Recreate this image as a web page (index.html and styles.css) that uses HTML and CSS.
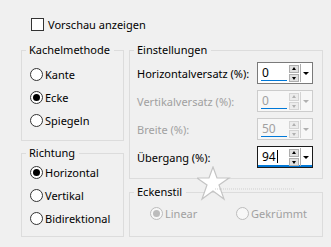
FILE: index.html
```html
<!DOCTYPE html>
<html lang="de">
<head>
    <meta charset="UTF-8">
    <title>Kacheln</title>
    <link rel="stylesheet" href="styles.css">
</head>
<body>
    <div class="dialog">
        <div class="preview">
            <span class="check"></span>
            <span>Vorschau anzeigen</span>
        </div>
        <div class="cols">
            <div class="col-left">
                <fieldset class="group tiles">
                    <legend>Kachelmethode</legend>
                    <div class="inner">
                        <div class="opt"><span class="radio"></span>Kante</div>
                        <div class="opt"><span class="radio on"></span>Ecke</div>
                        <div class="opt"><span class="radio"></span>Spiegeln</div>
                    </div>
                </fieldset>
                <fieldset class="group dir">
                    <legend>Richtung</legend>
                    <div class="inner">
                        <div class="opt"><span class="radio on"></span>Horizontal</div>
                        <div class="opt"><span class="radio"></span>Vertikal</div>
                        <div class="opt"><span class="radio"></span>Bidirektional</div>
                    </div>
                </fieldset>
            </div>
            <div class="col-right">
                <fieldset class="group settings">
                    <legend>Einstellungen</legend>
                    <div class="inner">
                        <div class="row">
                            <span>Horizontalversatz (%):</span>
                            <div class="spin">
                                <div class="val"><span>0</span><i class="bar"></i></div>
                                <div class="arrows"><b class="up"></b><b class="down"></b></div>
                                <div class="drop"><b></b></div>
                            </div>
                        </div>
                        <div class="row off">
                            <span>Vertikalversatz (%):</span>
                            <div class="spin">
                                <div class="val"><span>0</span><i class="bar"></i></div>
                                <div class="arrows"><b class="up"></b><b class="down"></b></div>
                                <div class="drop"><b></b></div>
                            </div>
                        </div>
                        <div class="row off">
                            <span>Breite (%):</span>
                            <div class="spin">
                                <div class="val"><span>50</span><i class="bar"></i></div>
                                <div class="arrows"><b class="up"></b><b class="down"></b></div>
                                <div class="drop"><b></b></div>
                            </div>
                        </div>
                        <div class="row">
                            <span>Übergang (%):</span>
                            <div class="spin focus">
                                <div class="val"><span>94<u class="caret"></u></span></div>
                                <div class="arrows"><b class="up"></b><b class="down"></b></div>
                                <div class="drop"><b></b></div>
                            </div>
                        </div>
                    </div>
                </fieldset>
                <fieldset class="group corner">
                    <legend>Eckenstil</legend>
                    <div class="inner opts off">
                        <div class="opt"><span class="radio on"></span>Linear</div>
                        <div class="opt"><span class="radio"></span>Gekrümmt</div>
                    </div>
                </fieldset>
            </div>
        </div>
        <!-- watermark stamp over the dialog -->
        <svg class="stamp" width="100" height="40" viewBox="0 0 100 40">
            <path d="M16 1 L20 12 L32 12 L22 19 L27 33 L16 25 L5 33 L10 19 L0 12 L12 12 Z" fill="#fff" stroke="#c4c4c4" stroke-width="1.2"/>
            <line x1="18" y1="23" x2="97" y2="23" stroke="#cfcfcf" stroke-width="1" stroke-dasharray="1 1"/>
        </svg>
    </div>
</body>
</html>
```

FILE: styles.css
```css
*{
    margin: 0;
    padding: 0;
    box-sizing: border-box;
}
body{
    background: #f0f0f0;
    font-family: "Noto Sans", "Open Sans", sans-serif;
    font-size: 11px;
    color: #000;
}
.dialog{
    position: relative;
    width: 331px;
    height: 247px;
    padding-top: 16px;
}
.preview{
    display: flex;
    align-items: center;
    height: 16px;
    padding-left: 31px;
    gap: 4px;
}
.check{
    width: 13px;
    height: 13px;
    border: 1px solid #333;
    background: #fff;
}
.cols{
    display: flex;
    gap: 5px;
    padding-left: 21px;
    margin-top: 10px;
}
.col-left{
    width: 103px;
}
.col-right{
    width: 194px;
}
.group{
    border: 1px solid #dcdcdc;
}
.group legend{
    line-height: 16px;
    height: 16px;
    margin-left: 4px;
    padding: 0 4px 0 3px;
}
.tiles{
    height: 99px;
}
.tiles .inner{
    padding: 5px 0 0 8px;
}
.dir{
    margin-top: 4px;
    height: 92px;
}
.dir .inner{
    padding: 0 0 0 8px;
}
.opt{
    display: flex;
    align-items: center;
    height: 23px;
    gap: 2px;
}
.radio{
    position: relative;
    width: 13px;
    height: 13px;
    border: 1px solid #333;
    border-radius: 50%;
    background: #fff;
}
.radio.on::after{
    content: "";
    position: absolute;
    left: 2px;
    top: 2px;
    width: 7px;
    height: 7px;
    border-radius: 50%;
    background: #000;
}
.settings{
    height: 137px;
}
.settings .inner{
    padding: 1px 9px 0 7px;
}
.row{
    display: flex;
    align-items: center;
    justify-content: space-between;
    height: 28px;
}
.off{
    color: #a0a0a0;
}
.spin{
    display: flex;
    width: 56px;
    height: 22px;
    border: 1px solid #7a7a7a;
    background: #fff;
    color: #000;
}
.off .spin{
    border-color: #cccccc;
    background: #f7f7f7;
    color: #a0a0a0;
}
.spin.focus{
    border-color: #1b1b1b;
    box-shadow: inset 0 -2px 0 #0078d7;
}
.val{
    width: 31px;
    display: flex;
    flex-direction: column;
    justify-content: space-between;
    padding: 2px 2px 2px 3px;
    line-height: 15px;
    font-size: 12px;
}
.val span{
    padding-left: 1px;
    display: flex;
    align-items: center;
}
.bar{
    display: block;
    height: 2px;
    background: #0078d7;
}
.caret{
    display: inline-block;
    width: 1px;
    height: 13px;
    background: #000;
    margin-left: 1px;
}
.arrows{
    width: 10px;
    display: flex;
    flex-direction: column;
    justify-content: center;
    gap: 1px;
}
.arrows b{
    position: relative;
    height: 8px;
    border: 1px solid #adadad;
    background: #e1e1e1;
}
.arrows b::after{
    content: "";
    position: absolute;
    left: 2px;
    border-left: 2px solid transparent;
    border-right: 2px solid transparent;
}
.arrows .up::after{
    top: 1px;
    border-bottom: 3px solid #000;
}
.arrows .down::after{
    top: 2px;
    border-top: 3px solid #000;
}
.drop{
    flex: 1;
    display: flex;
    align-items: center;
    justify-content: center;
    border-left: 1px solid #adadad;
    margin: 1px;
}
.drop b{
    border-left: 3px solid transparent;
    border-right: 3px solid transparent;
    border-top: 3px solid #000;
}
.off .arrows b{
    border-color: #d4d4d4;
    background: #ececec;
}
.off .arrows b::after{
    border-top-color: #b0b0b0;
    border-bottom-color: #b0b0b0;
}
.off .drop{
    border-color: #d4d4d4;
}
.off .drop b{
    border-top-color: #b0b0b0;
}
.corner{
    margin-top: 5px;
    height: 53px;
}
.corner .inner{
    padding: 2px 0 0 20px;
}
.opts{
    display: flex;
}
.opts .opt:first-child{
    width: 86px;
}
.opts .radio{
    border-color: #bcbcbc;
    background: #f7f7f7;
}
.opts .radio.on::after{
    background: #bcbcbc;
}
.stamp{
    position: absolute;
    left: 197px;
    top: 166px;
}
```
